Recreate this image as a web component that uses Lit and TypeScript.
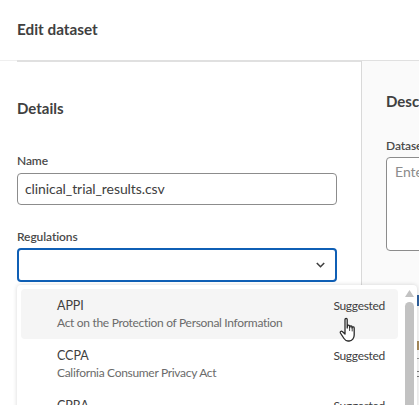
import { LitElement, html, css } from "lit";
import { customElement } from "lit/decorators.js";

const OPTIONS = [
  { name: "APPI", desc: "Act on the Protection of Personal Information", hover: true },
  { name: "CCPA", desc: "California Consumer Privacy Act", hover: false },
  { name: "CPRA", desc: "California Privacy Rights Act", hover: false },
];

@customElement("app-root")
export class AppRoot extends LitElement {
  static styles = css`
    :host {
      display: block;
      position: relative;
      width: 419px;
      height: 405px;
      overflow: hidden;
      background: #fff;
      font-family: "Lato", "Noto Sans", sans-serif;
      color: #404040;
    }
    .header {
      height: 61px;
      box-sizing: border-box;
      padding: 19px 17px 0;
      font-size: 15.3px;
      line-height: 20px;
      font-weight: 700;
      border-bottom: 1px solid #efefef;
      position: relative;
    }
    .rule {
      position: absolute;
      left: 17px;
      right: 0;
      bottom: -2px;
      height: 2px;
      background: #e0e0e0;
    }
    .body {
      display: flex;
      height: 344px;
    }
    .left {
      width: 361px;
      box-sizing: border-box;
      padding: 37px 24px 0 17px;
      flex: none;
    }
    .right {
      flex: 1;
      position: relative;
      background: #fafafa;
      border-left: 1px solid #d9d9d9;
      padding: 30px 0 0 24px;
      overflow: hidden;
      white-space: nowrap;
    }
    h2 {
      margin: 0;
      font-size: 15px;
      line-height: 20px;
      font-weight: 700;
    }
    label {
      display: block;
      font-size: 12px;
      line-height: 16px;
      font-weight: 600;
      letter-spacing: -0.1px;
      color: #4a4a4a;
    }
    .left h2 { margin-bottom: 35px; }
    .field {
      height: 32px;
      box-sizing: border-box;
      margin-top: 4px;
      border: 1px solid #8c8c8c;
      border-radius: 4px;
      padding: 0 7px;
      font-size: 14px;
      letter-spacing: -0.08px;
      line-height: 30px;
      background: #fff;
    }
    .select {
      margin-top: 3px;
      height: 34px;
      box-sizing: border-box;
      border: 2px solid #0f5fb5;
      border-radius: 4px;
      background: #fff;
      display: flex;
      align-items: center;
      justify-content: flex-end;
      padding-right: 10px;
    }
    .gap { height: 24px; }
    .right h2 { margin-bottom: 27px; }
    .textarea {
      margin-top: 3px;
      width: 100px;
      height: 94px;
      box-sizing: border-box;
      border: 1px solid #8c8c8c;
      border-radius: 4px;
      background: #fff;
      padding: 4px 8px;
      font-size: 14px;
      line-height: 20px;
      color: #8c8c8c;
    }
    .peek {
      position: absolute;
      right: 0;
      width: 2px;
    }
    .peek.a { top: 234px; height: 11px; background: #2f62a0; }
    .peek.b { top: 280px; height: 9px; background: #a98c5c; }
    .peek.c { top: 297px; height: 1px; background: #9a9a9a; }
    .peek.d { top: 310px; height: 1px; background: #7a7a7a; }
    .peek.e { top: 315px; height: 1px; background: #7a7a7a; }
    .popup {
      position: absolute;
      left: 17px;
      top: 285px;
      width: 400px;
      height: 130px;
      box-sizing: border-box;
      background: #fff;
      border-radius: 4px;
      box-shadow: 0 0 4px rgba(0, 0, 0, 0.16);
      display: flex;
    }
    .list {
      width: 381px;
      flex: none;
      box-sizing: border-box;
      padding: 4px 0 0 4px;
      display: flex;
      flex-direction: column;
    }
    .opt {
      height: 50px;
      flex: none;
      box-sizing: border-box;
      padding: 8px 13px 0 36px;
      border-radius: 4px;
      display: grid;
      grid-template-columns: 1fr auto;
      grid-template-rows: 18px 18px;
      font-size: 12.5px;
      letter-spacing: -0.05px;
      line-height: 18px;
    }
    .opt.hover { background: #f5f5f5; }
    .tag { font-size: 12px; letter-spacing: -0.3px; }
    .desc {
      color: #6b6b6b;
      grid-column: 1 / 3;
      font-size: 12px;
      letter-spacing: -0.31px;
      line-height: 16px;
    }
    .bar {
      width: 9px;
      flex: none;
      margin-left: 7px;
      display: flex;
      flex-direction: column;
      align-items: center;
      padding-top: 5px;
    }
    .thumb {
      width: 9px;
      margin-top: 5px;
      flex: 1;
      background: #c2c2c2;
      border-radius: 5px 5px 0 0;
    }
    .cursor {
      position: absolute;
      left: 339px;
      top: 317px;
      width: 20px;
      height: 26px;
    }
  `;

  render() {
    return html`
      <div class="header">Edit dataset<div class="rule"></div></div>
      <div class="body">
        <div class="left">
          <h2>Details</h2>
          <label>Name</label>
          <div class="field">clinical_trial_results.csv</div>
          <div class="gap"></div>
          <label>Regulations</label>
          <div class="select">
            <svg width="9" height="6" viewBox="0 0 9 6" fill="none" stroke="#404040" stroke-width="1.6">
              <path d="M.8 1l3.7 3.7L8.200 1" />
            </svg>
          </div>
        </div>
        <div class="right">
          <h2>Description</h2>
          <label>Dataset description</label>
          <div class="textarea">Enter a description</div>
          <div class="peek a"></div>
          <div class="peek b"></div>
          <div class="peek c"></div>
          <div class="peek d"></div>
          <div class="peek e"></div>
        </div>
      </div>
      <div class="popup">
        <div class="list">
          ${OPTIONS.map(
            (o) => html`<div class="opt ${o.hover ? "hover" : ""}">
              <span>${o.name}</span><span class="tag">Suggested</span>
              <span class="desc">${o.desc}</span>
            </div>`
          )}
        </div>
        <div class="bar">
          <svg width="9" height="7" viewBox="0 0 9 7"><path d="M4.500 0L9 7H0z" fill="#c2c2c2" /></svg>
          <div class="thumb"></div>
        </div>
      </div>
      <svg class="cursor" viewBox="0 0 20 26" fill="#fff" stroke="#2a2a2a" stroke-width="1.300" stroke-linejoin="round" stroke-linecap="round">
        <path d="M6 2.500c0-1.400 2.200-1.400 2.200 0V11l.3-2c.2-1.200 2-1.100 2.100.1l.1 1.400.3-1c.3-1 2-.8 2 .4v1l.3-.6c.4-.8 1.900-.5 1.900.6V18c0 3-2 6-5 6H9c-2 0-3-1-4-2.500L1.400 16c-.7-1.300.9-2.400 1.900-1.400L6 17z" />
        <path d="M10.600 9.500v4M13.200 10.500v3.500" fill="none" stroke-width="0.900" />
      </svg>
    `;
  }
}
